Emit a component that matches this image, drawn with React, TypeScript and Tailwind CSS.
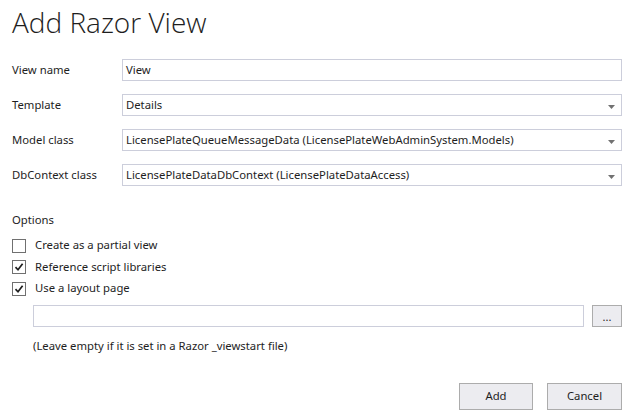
import React from "react";

const font = { fontFamily: '"Noto Sans", "Open Sans", sans-serif' };

function Caret() {
  return (
    <svg width="7" height="4" viewBox="0 0 7 4" className="absolute right-[6px] top-[10px]">
      <path d="M0 0 H7 L3.5 4 Z" fill="#717171" />
    </svg>
  );
}

function Field({ label, value, dropdown }: { label: string; value: string; dropdown?: boolean }) {
  return (
    <div className="flex items-center h-[22px]">
      <div className="w-[110px] text-[11.3px] text-[#1e1e1e]">{label}</div>
      <div className="relative w-[500px] h-[22px] border border-[#cccedb] bg-white flex items-center pl-[3px] text-[11.3px] text-[#1e1e1e]">
        {value}
        {dropdown && <Caret />}
      </div>
    </div>
  );
}

function Check({ checked, label }: { checked: boolean; label: string }) {
  return (
    <div className="flex items-center h-[21px]">
      <div className="w-[14px] h-[14px] border border-[#707070] bg-white flex items-center justify-center">
        {checked && (
          <svg width="10" height="10" viewBox="0 0 10 10">
            <path d="M1.5 5.2 L4 7.8 L8.6 1.8" stroke="#1e1e1e" strokeWidth="1.7" fill="none" />
          </svg>
        )}
      </div>
      <span className="ml-[9px] text-[11.3px] text-[#1e1e1e]">{label}</span>
    </div>
  );
}

export default function App() {
  return (
    <div className="w-[635px] h-[416px] bg-white px-[12px] overflow-hidden" style={font}>
      <div
        className="pt-[5px] h-[59px] text-[28px] leading-[34px] font-light text-[#1e1e1e]"
        style={{ fontFamily: '"Open Sans", "Noto Sans", sans-serif' }}
      >
        Add Razor View
      </div>
      <div className="flex flex-col gap-[13px]">
        <Field label="View name" value="View" />
        <Field label="Template" value="Details" dropdown />
        <Field label="Model class" value="LicensePlateQueueMessageData (LicensePlateWebAdminSystem.Models)" dropdown />
        <Field label="DbContext class" value="LicensePlateDataDbContext (LicensePlateDataAccess)" dropdown />
      </div>
      <div className="mt-[25px] text-[11.3px] text-[#1e1e1e] leading-[18px]">Options</div>
      <div className="mt-[6px] flex flex-col gap-[0.5px]">
        <Check checked={false} label="Create as a partial view" />
        <Check checked label="Reference script libraries" />
        <Check checked label="Use a layout page" />
      </div>
      <div className="mt-[6px] ml-[21px] flex gap-[8px]">
        <div className="w-[551px] h-[22px] border border-[#cccedb] bg-white" />
        <div className="w-[30px] h-[22px] border border-[#acacac] bg-[#ececf0] flex items-center justify-center text-[11px] leading-none text-[#1e1e1e]">...</div>
      </div>
      <div className="mt-[11px] ml-[21px] text-[11.3px] text-[#1e1e1e]">(Leave empty if it is set in a Razor _viewstart file)</div>
      <div className="mt-[28px] flex justify-end gap-[14px] pr-[1px]">
        <button className="w-[74px] h-[27px] border border-[#acacac] bg-[#ececf0] text-[11.3px] text-[#1e1e1e]">Add</button>
        <button className="w-[75px] h-[27px] border border-[#acacac] bg-[#ececf0] text-[11.3px] text-[#1e1e1e]">Cancel</button>
      </div>
    </div>
  );
}
